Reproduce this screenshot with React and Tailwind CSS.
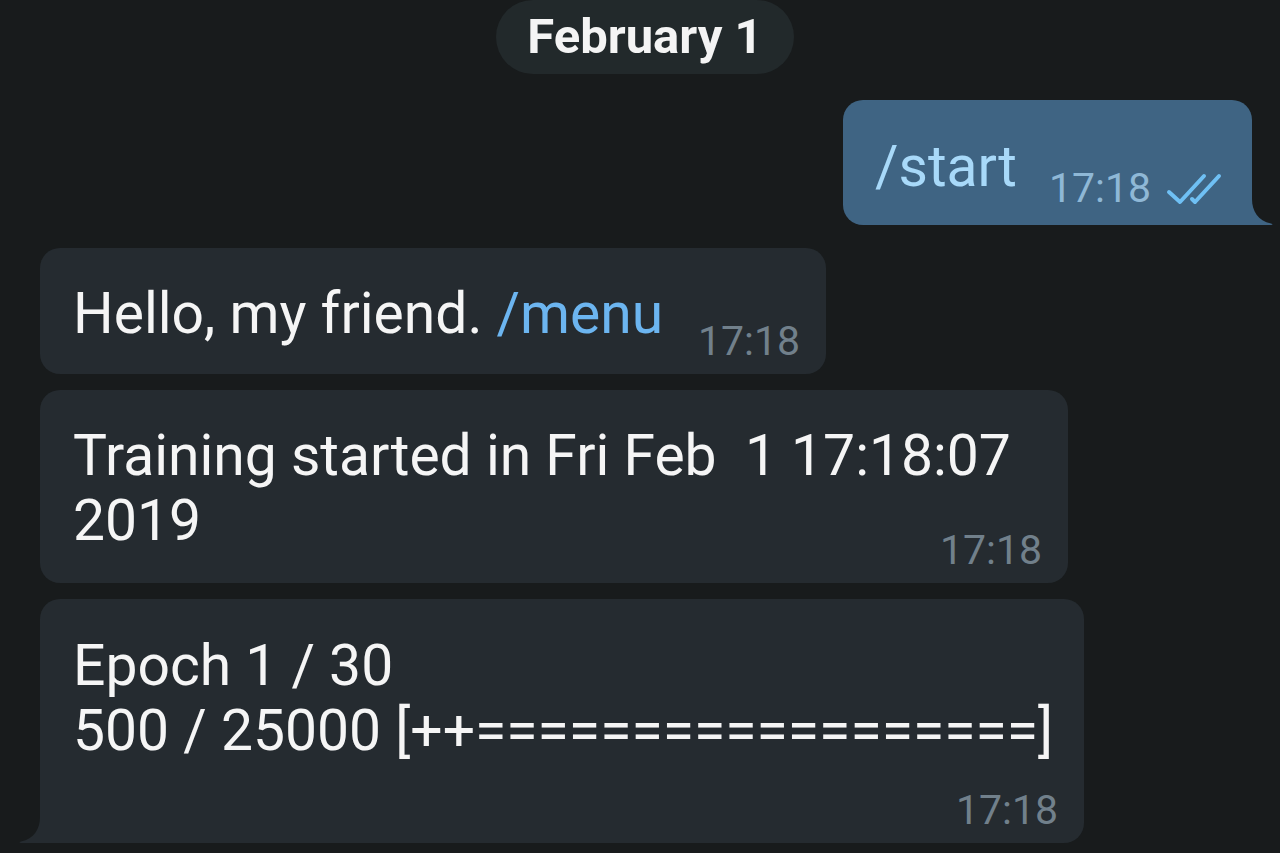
import React from 'react'

const font = { fontFamily: 'Roboto, "Noto Sans", sans-serif' }

// little curved tail that hangs off the last bubble of a group
const Tail = ({ side, fill }) => (
    <svg
        width="22"
        height="26"
        viewBox="0 0 22 26"
        className={side === 'right' ? 'absolute bottom-0 left-full' : 'absolute bottom-0 right-full -scale-x-100'}
    >
        <path d="M0 0 C0 12 6 22 19 24.5 Q22 25.5 19 26 L0 26 Z" fill={fill} />
    </svg>
)

const Checks = () => (
    <svg width="58" height="36" viewBox="0 0 58 36" fill="none" stroke="#6fc0f4" strokeWidth="4" strokeLinecap="round" strokeLinejoin="round">
        <path d="M5 21 L16 31 L40 5" />
        <path d="M28 28 L31 31 L55 5" />
    </svg>
)

const Time = ({ children, className = '' }) => (
    <span className={`text-[41px] leading-[41px] shrink-0 ${className}`}>{children}</span>
)

const App = () => {
    return (
        <div style={font} className="w-full h-[853px] bg-[#181b1c] overflow-hidden flex flex-col">
            {/* Date pill */}
            <div className="flex justify-center pl-[10px]">
                <div className="h-[74px] px-[31px] rounded-full bg-[#22292b] text-[49px] leading-[74px] font-bold text-[#f4f4f4]">
                    February 1
                </div>
            </div>

            {/* Outgoing */}
            <div className="flex justify-end pr-[28px] mt-[26px]">
                <div className="relative w-[409px] h-[125px] bg-[#3f6483] rounded-[20px] rounded-br-none flex pl-[32px] pr-[30px]">
                    <span className="pt-[34px] text-[57px] leading-[65px] text-[#a8d9f9]">/start</span>
                    <div className="ml-auto self-end pb-[16px] flex items-end gap-[13px]">
                        <Time className="text-[#8fb8d6]">17:18</Time>
                        <div className="mb-[2px]"><Checks /></div>
                    </div>
                    <Tail side="right" fill="#3f6483" />
                </div>
            </div>

            {/* Incoming */}
            <div className="flex flex-col items-start pl-[40px] mt-[23px] gap-[16px]">
                <div className="w-[786px] h-[126px] bg-[#252b30] rounded-[20px] flex pl-[33px] pr-[26px] pb-[12px]">
                    <span className="pt-[33px] text-[57px] leading-[65px] text-[#f5f5f5] whitespace-pre">
                        Hello, my friend. <span className="text-[#6cb5f0]">/menu</span>
                    </span>
                    <Time className="ml-auto self-end text-[#71808b]">17:18</Time>
                </div>

                <div className="w-[1028px] h-[193px] bg-[#252b30] rounded-[20px] flex flex-col pl-[33px] pr-[26px] pb-[12px]">
                    <div className="flex-1 min-h-0 pt-[33px] text-[57px] leading-[65px] text-[#f5f5f5] whitespace-pre">
                        <div>Training started in Fri Feb  1 17:18:07</div>
                        <div>2019</div>
                    </div>
                    <Time className="self-end text-[#71808b]">17:18</Time>
                </div>

                <div className="relative w-[1044px] h-[244px] bg-[#252b30] rounded-[20px] rounded-bl-none flex flex-col pl-[33px] pr-[26px] pb-[12px]">
                    <div className="flex-1 min-h-0 pt-[34px] text-[57px] leading-[65px] text-[#f5f5f5] whitespace-pre">
                        <div>Epoch 1 / 30</div>
                        <div>500 / 25000 [++==================]</div>
                    </div>
                    <Time className="self-end text-[#71808b]">17:18</Time>
                    <Tail side="left" fill="#252b30" />
                </div>
            </div>
        </div>
    )
}

export default App
